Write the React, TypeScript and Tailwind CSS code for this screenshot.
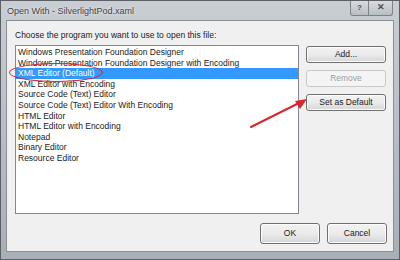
const programs = [
  "Windows Presentation Foundation Designer",
  "Windows Presentation Foundation Designer with Encoding",
  "XML Editor (Default)",
  "XML Editor with Encoding",
  "Source Code (Text) Editor",
  "Source Code (Text) Editor With Encoding",
  "HTML Editor",
  "HTML Editor with Encoding",
  "Notepad",
  "Binary Editor",
  "Resource Editor",
];

function Btn({ label, disabled, className = "" }: { label: string; disabled?: boolean; className?: string }) {
  return (
    <div
      className={`flex items-center justify-center rounded-[3px] border text-[8.5px] ${
        disabled
          ? "border-[#c9c9c9] bg-[#f4f4f4] text-[#a0a0a0]"
          : "border-[#707070] bg-gradient-to-b from-[#f2f2f2] via-[#ebebeb] to-[#d6d6d6] text-[#1a1a1a] shadow-[inset_0_0_0_1px_#fcfcfc]"
      } ${className}`}
    >
      {label}
    </div>
  );
}

export default function App() {
  return (
    <div
      className="relative flex h-[260px] w-[400px] flex-col overflow-hidden border border-[#5c5f63] bg-gradient-to-b from-[#c9ced4] via-[#b8bec5] to-[#a9afb6]"
      style={{ fontFamily: '"Liberation Sans", Arial, sans-serif' }}
    >
      {/* Title bar */}
      <div className="flex h-[19px] shrink-0 items-start justify-between pl-[6px] pr-[6px]">
        <span className="mt-[4px] text-[9px] text-[#3c3f44] [text-shadow:0_0_3px_#ffffff]">Open With - SilverlightPod.xaml</span>
        <div className="flex">
          <div className="flex h-[15px] w-[19px] items-center justify-center rounded-bl-[3px] border border-t-0 border-[#7d8288] bg-gradient-to-b from-[#d8dce0] to-[#b9bec4] text-[8px] font-bold text-[#4b4f55]">
            ?
          </div>
          <div className="flex h-[15px] w-[24px] items-center justify-center rounded-br-[3px] border border-l-0 border-t-0 border-[#7d8288] bg-gradient-to-b from-[#d8dce0] to-[#b9bec4] text-[9px] font-bold text-[#4b4f55]">
            ✕
          </div>
        </div>
      </div>

      {/* Client area */}
      <div className="relative mx-[5px] mb-[7px] flex flex-1 flex-col border border-[#8a8f95] bg-[#f0f0f0] pl-[8px] pt-[8px]">
        <p className="text-[8.5px] leading-[12px] text-[#1a1a1a]">Choose the program you want to use to open this file:</p>

        <div className="mt-[4px] flex gap-[7px]">
          <div className="h-[169px] w-[284px] border border-[#828790] bg-white pt-[1px]">
            {programs.map((p, i) => (
              <div
                key={p}
                className={`h-[10.6px] pl-[2px] text-[8.5px] leading-[10.6px] ${
                  i === 2 ? "bg-[#3399ff] text-white" : "text-[#1a1a1a]"
                }`}
              >
                {p}
              </div>
            ))}
          </div>
          <div className="flex flex-col gap-[7px] pt-[1px]">
            <Btn label="Add..." className="h-[17px] w-[80px]" />
            <Btn label="Remove" disabled className="h-[17px] w-[80px]" />
            <Btn label="Set as Default" className="h-[17px] w-[80px]" />
          </div>
        </div>

        <div className="mt-[9px] flex justify-end gap-[7px] pr-[6px]">
          <Btn label="OK" className="h-[21px] w-[60px]" />
          <Btn label="Cancel" className="h-[21px] w-[60px]" />
        </div>

        {/* Annotation: red ellipse */}
        <div className="absolute left-[2px] top-[42px] h-[19px] w-[94px] rounded-[50%] border-[1.5px] border-[#d8262c]" />
        {/* Annotation: red arrow */}
        <svg className="absolute left-[238px] top-[74px]" width="66" height="36" viewBox="0 0 66 36">
          <line x1="6" y1="32" x2="58" y2="6" stroke="#d8262c" strokeWidth="2" strokeLinecap="round" />
          <polygon points="62,4 50,6 55,14" fill="#d8262c" />
        </svg>
      </div>
    </div>
  );
}
